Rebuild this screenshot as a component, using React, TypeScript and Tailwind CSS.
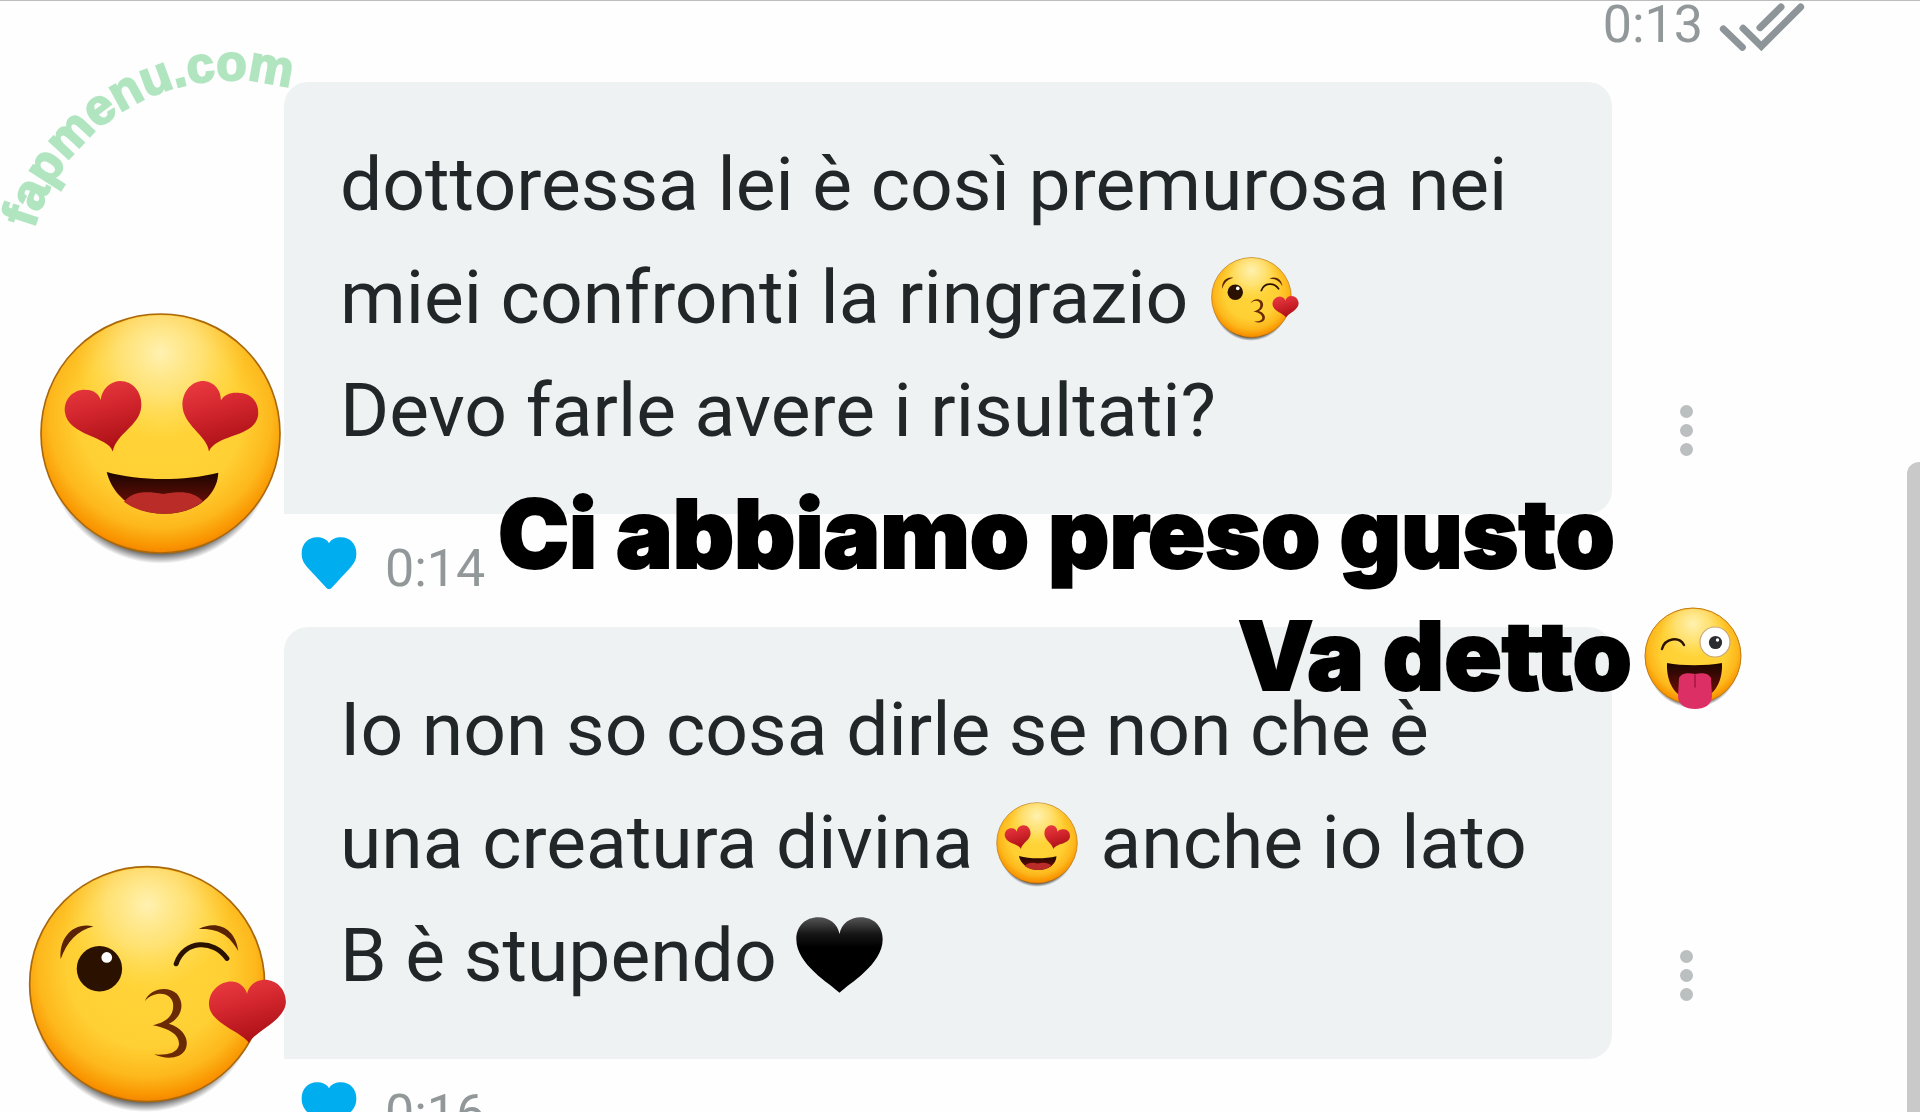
import { useId, type ReactNode } from "react";

type IconProps = { className?: string };

const HEART =
  "M0 98C-18 66-110 40-112-14C-112-58-70-84-38-78C-16-74-4-58 0-42C4-58 18-78 46-80C84-82 112-54 112-16C110 38 18 66 0 98Z";

function FaceDefs({ id }: { id: string }) {
  return (
    <defs>
      <radialGradient id={`${id}-face`} cx="0.5" cy="0.43" r="0.58">
        <stop offset="0" stopColor="#ffd53a" />
        <stop offset="0.58" stopColor="#ffd034" />
        <stop offset="0.8" stopColor="#fdb81c" />
        <stop offset="0.94" stopColor="#f99400" />
        <stop offset="1" stopColor="#f07f00" />
      </radialGradient>
      <radialGradient id={`${id}-shine`} cx="0.5" cy="0.16" r="0.36">
        <stop offset="0" stopColor="#fff3b8" stopOpacity="0.95" />
        <stop offset="0.5" stopColor="#ffec9a" stopOpacity="0.6" />
        <stop offset="1" stopColor="#ffe36a" stopOpacity="0" />
      </radialGradient>
      <linearGradient id={`${id}-heart`} x1="0.3" y1="0" x2="0.6" y2="1">
        <stop offset="0" stopColor="#e8383e" />
        <stop offset="0.45" stopColor="#d0242c" />
        <stop offset="1" stopColor="#a80f14" />
      </linearGradient>
      <linearGradient id={`${id}-mouth`} x1="0" y1="0" x2="0" y2="1">
        <stop offset="0" stopColor="#1c0500" />
        <stop offset="1" stopColor="#7d1108" />
      </linearGradient>
      <radialGradient id={`${id}-shadow`}>
        <stop offset="0.9" stopColor="#222" stopOpacity="0.8" />
        <stop offset="1" stopColor="#222" stopOpacity="0" />
      </radialGradient>
    </defs>
  );
}

function HeartEyes({ className }: IconProps) {
  const id = useId();
  return (
    <svg viewBox="116 66 732 760" className={className} role="img" aria-label="Smiling face with heart eyes">
      <FaceDefs id={id} />
      <ellipse cx="482" cy="474" rx="345" ry="350" fill={`url(#${id}-shadow)`} />
      <circle cx="482" cy="432" r="360" fill={`url(#${id}-face)`} stroke="#a9680c" strokeWidth="5" />
      <circle cx="482" cy="432" r="356" fill={`url(#${id}-shine)`} />
      <path
        d="M338 486C326 440 204 440 194 368C190 318 232 292 270 302C288 307 298 318 302 332C304 302 326 276 360 274C400 274 428 310 424 352C418 410 350 430 338 486Z"
        fill={`url(#${id}-heart)`}
      />
      <path
        d="M628 486C622 436 548 408 548 344C550 300 580 272 614 274C646 278 664 302 664 332C674 314 698 306 722 310C760 312 780 344 776 378C764 446 652 432 628 486Z"
        fill={`url(#${id}-heart)`}
      />
      <path d="M320 548C420 576 550 576 656 550C654 620 586 674 494 674C400 674 336 616 320 548Z" fill={`url(#${id}-mouth)`} />
      <path d="M372 638C400 604 440 606 490 614C540 606 580 604 610 636C580 662 540 673 494 674C444 673 404 662 372 638Z" fill="#b92c27" />
    </svg>
  );
}

function KissingFace({ className }: IconProps) {
  const id = useId();
  return (
    <svg viewBox="84 76 776 746" className={className} role="img" aria-label="Face blowing a kiss">
      <FaceDefs id={id} />
      <ellipse cx="436" cy="474" rx="338" ry="342" fill={`url(#${id}-shadow)`} />
      <circle cx="441" cy="433" r="352" fill={`url(#${id}-face)`} stroke="#a9680c" strokeWidth="5" />
      <circle cx="441" cy="433" r="348" fill={`url(#${id}-shine)`} />
      <path d="M182 358C176 296 218 246 280 260C232 272 200 306 182 358Z" fill="#5a2305" />
      <path d="M596 268C650 240 706 266 714 334C692 294 660 264 596 268Z" fill="#5a2305" />
      <circle cx="298" cy="387" r="68" fill="#2b1200" />
      <circle cx="320" cy="353" r="16" fill="#fff" />
      <path d="M528 372C552 300 640 298 680 356" fill="none" stroke="#2b1200" strokeWidth="15" strokeLinecap="round" />
      <path
        d="M434 484C450 444 504 438 530 462C558 496 540 536 506 552C552 566 568 602 556 628C542 656 500 660 462 644C502 646 530 640 536 616C540 586 510 566 458 556C504 546 524 522 518 488C510 456 462 452 434 484Z"
        fill="#6a2a06"
      />
      <path d={HEART} transform="translate(742 506) rotate(-2) scale(1.03 1.05)" fill={`url(#${id}-heart)`} />
    </svg>
  );
}

function WinkTongue({ className }: IconProps) {
  const id = useId();
  return (
    <svg viewBox="468 137 98 104" className={className} role="img" aria-label="Winking face with tongue">
      <FaceDefs id={id} />
      <ellipse cx="517" cy="190" rx="47" ry="48" fill={`url(#${id}-shadow)`} />
      <circle cx="517" cy="186" r="48" fill={`url(#${id}-face)`} stroke="#c27a10" strokeWidth="1" />
      <circle cx="517" cy="186" r="47" fill={`url(#${id}-shine)`} />
      <path d="M486 179C489 168 503 166 508 175" fill="none" stroke="#2b1200" strokeWidth="2.4" strokeLinecap="round" />
      <circle cx="539" cy="172" r="15" fill="#fff" stroke="#c9a878" strokeWidth="1.2" />
      <circle cx="539.5" cy="172.5" r="6.6" fill="#2a2c30" />
      <circle cx="541.5" cy="170" r="1.7" fill="#fff" />
      <path d="M491 193C506 196 530 196 546 193C547 214 536 230 518 230C501 230 490 214 491 193Z" fill={`url(#${id}-mouth)`} />
      <path d="M503 208C506 202 514 203 519 204C524 203 532 202 535 208L536 226C536 235 528 239 519 239C510 239 502 235 502 226Z" fill="#dc2f66" />
      <path d="M519 205V217" stroke="#a81545" strokeWidth="1.5" strokeLinecap="round" />
    </svg>
  );
}

function BlackHeart({ className }: IconProps) {
  const id = useId();
  return (
    <svg viewBox="108 80 268 234" className={className} role="img" aria-label="Black heart">
      <defs>
        <linearGradient id={id} x1="0" y1="0" x2="0" y2="1">
          <stop offset="0" stopColor="#555" />
          <stop offset="0.22" stopColor="#161616" />
          <stop offset="0.4" stopColor="#000" />
        </linearGradient>
      </defs>
      <path d="M242 311C214 284 112 226 112 150C112 110 140 84 178 84C212 84 236 104 242 134C248 104 272 84 306 84C344 84 372 110 372 150C372 226 270 284 242 311Z" fill={`url(#${id})`} />
    </svg>
  );
}

function BlueHeart({ className }: IconProps) {
  return (
    <svg viewBox="62 108 170 162" className={className} aria-hidden="true">
      <path d="M147 270Q142 269 136 262L86 208C70 190 64 180 64 160C64 132 84 112 110 112C126 112 140 118 147 130C154 118 168 112 184 112C210 112 230 132 230 160C230 180 224 190 208 208L158 262Q152 269 147 270Z" fill="#00adee" />
    </svg>
  );
}

function DoubleCheck({ className }: IconProps) {
  return (
    <svg viewBox="478 10 258 146" className={className} role="img" aria-label="Read" fill="none" stroke="#8d9599" strokeWidth="21">
      <path d="M491 88L548 143" strokeLinecap="round" />
      <path d="M550 86L605 140L723 22" strokeLinecap="round" />
      <path d="M601 84L664 22" strokeLinecap="round" />
    </svg>
  );
}

function Watermark() {
  return (
    <svg viewBox="0 0 310 240" className="pointer-events-none absolute left-0 top-0 w-[310px]">
      <path id="watermark-arc" d="M34 228A206 206 0 0 1 438 285" fill="none" />
      <text className="fill-[#b0e5c0] stroke-[#b0e5c0] stroke-2 font-['Liberation_Sans',sans-serif] text-[50px] font-bold">
        <textPath href="#watermark-arc">fapmenu.com</textPath>
      </text>
    </svg>
  );
}

type MessageProps = { sticker: ReactNode; time: string; children: ReactNode };

function Message({ sticker, time, children }: MessageProps) {
  return (
    <article className="flex">
      <div className="w-[284px] shrink-0">{sticker}</div>
      <div className="min-w-0 flex-1">
        <div className="rounded-3xl rounded-bl-none bg-[#eef2f3] px-14 pb-[47px] pt-[46px]">
          <p className="whitespace-nowrap text-[75px] leading-[113px] text-[#212629]">{children}</p>
        </div>
        <div className="flex h-[113px] items-center gap-7 pl-[17px]">
          <button type="button" aria-label="Like" className="-mt-4">
            <BlueHeart className="w-14" />
          </button>
          <time className="-mt-1 text-[52px] leading-none text-[#929899]">{time}</time>
        </div>
      </div>
      <div className="w-[308px] shrink-0 pl-[68px] pt-[323px]">
        <button type="button" aria-label="Message options" className="flex flex-col gap-1.5">
          <span className="size-[13px] rounded-full bg-[#bbbfc0]" />
          <span className="size-[13px] rounded-full bg-[#bbbfc0]" />
          <span className="size-[13px] rounded-full bg-[#bbbfc0]" />
        </button>
      </div>
    </article>
  );
}

export default function App() {
  return (
    <main className="relative h-screen overflow-hidden border-t border-[#bdbdbd] bg-[#fefefe] font-[Roboto,sans-serif]">
      <header className="flex h-[81px] items-start justify-end gap-4 pr-[115px]">
        <time className="text-[52px] leading-[48px] text-[#929899]">0:13</time>
        <DoubleCheck className="mt-0.5 w-[86px]" />
      </header>

      <Message time="0:14" sticker={<HeartEyes className="ml-[39px] mt-[230px] w-[243px]" />}>
        dottoressa lei è così premurosa nei
        <br />
        miei confronti la ringrazio <KissingFace className="ml-1 inline-block w-[88px] align-[-19px]" />
        <br />
        Devo farle avere i risultati?
      </Message>

      <Message time="0:16" sticker={<KissingFace className="relative ml-7 mt-[238px] w-[259px] max-w-none" />}>
        Io non so cosa dirle se non che è
        <br />
        una creatura divina <HeartEyes className="mx-1 inline-block w-[82px] align-[-19px]" /> anche io lato
        <br />
        B è stupendo <BlackHeart className="inline-block w-[89px] align-[-13px]" />
      </Message>

      <div className="absolute left-[498px] top-[472px] font-[Inter,sans-serif] text-[95px] font-black leading-[122px] text-black [-webkit-text-stroke:2px_black] [font-variant-ligatures:none]">
        <p className="whitespace-nowrap">Ci abbiamo preso gusto</p>
        <p className="flex items-center gap-3 whitespace-nowrap pl-[740px]">
          Va detto
          <WinkTongue className="mt-1.5 w-[98px] shrink-0" />
        </p>
      </div>

      <Watermark />
      <div className="absolute bottom-0 right-0 top-[461px] w-[13px] rounded-tl-xl bg-[#c9c9c9]" />
    </main>
  );
}
